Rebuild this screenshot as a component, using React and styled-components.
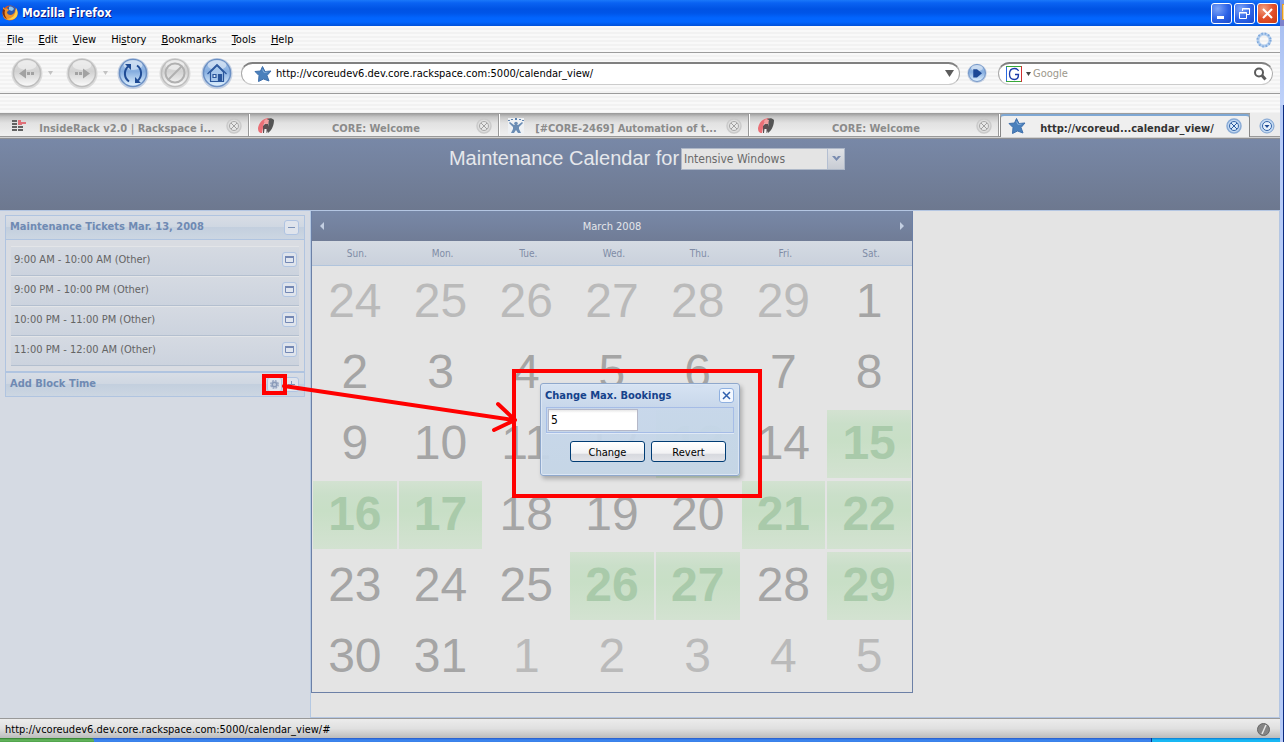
import React from "react";
import styled, { createGlobalStyle, css } from "styled-components";

const ui = `"DejaVu Sans Condensed", "DejaVu Sans", sans-serif`;
const arial = `"Liberation Sans", Arial, sans-serif`;

const Global = createGlobalStyle`
  *, *::before, *::after { box-sizing: border-box; }
  html, body { margin: 0; padding: 0; }
  body { font-family: ${ui}; font-size: 11px; color: #000; background: #b9cdf6; }
  button, input, select { font: inherit; margin: 0; padding: 0; }
  button { border: 0; background: none; display: block; }
  a { color: inherit; text-decoration: none; }
  svg { display: block; flex: none; }
  h1, h2 { margin: 0; }
`;

const stripes = css`
  background: repeating-linear-gradient(#f9f9f9 0 2px, #f2f2f2 2px 4px);
`;

const Desktop = styled.div`
  position: relative;
  display: flex;
  min-height: 100vh;
`;
const Main = styled.div`
  flex: 1;
  min-width: 0;
  display: flex;
  flex-direction: column;
`;
const Edge = styled.div`
  width: 4px;
  display: flex;
  flex-direction: column;
`;
const EdgeTop = styled.div`
  height: 26px;
  padding: 4px 0 0 2px;
  background: linear-gradient(#7c9cec, #7d7fc8);
`;
const EdgeMark = styled.div`
  height: 16px;
  border: 1px solid #e8a020;
  border-right: 0;
  background: #fbd795;
`;
const EdgeMid = styled.div`
  height: 79px;
  background: linear-gradient(#a9c0f2, #bfd2fa);
`;
const EdgeLow = styled.div`
  flex: 1;
  background: #b5caf7;
  border-right: 1px solid #0a2a80;
`;

const TitleBar = styled.header`
  height: 26px;
  display: flex;
  align-items: center;
  gap: 3px;
  padding: 0 2px;
  background: linear-gradient(#1a78fa 0, #0a62f2 3px, #0053e4 9px, #0055e8 13px, #0265fe 18px, #0265fe 22px, #0050d8 26px);
`;
const WindowTitle = styled.h1`
  flex: 1;
  font: bold 12px/16px ${ui};
  color: #fff;
  text-shadow: 1px 1px 0 #0a1883;
`;
const WinButton = styled.button`
  width: 21px;
  height: 21px;
  border: 1px solid #fff;
  border-radius: 3px;
  margin-left: -1px;
  display: grid;
  place-items: center;
  background: ${(p) =>
    p.$close
      ? "radial-gradient(circle at 30% 25%, #f0a080, #e2502c 50%, #c83a10)"
      : "radial-gradient(circle at 30% 25%, #7da4f8, #2c62e6 55%, #1b49c8)"};
`;

const MenuBar = styled.nav`
  height: 27px;
  border-bottom: 1px solid #9c9c9c;
  ${stripes}
  display: flex;
  align-items: center;
  gap: 15px;
  padding: 2px 8px 0 7px;
`;
const MenuLink = styled.a`
  line-height: 16px;
  u { text-underline-offset: 1px; }
`;
const Spring = styled.span`
  flex: 1;
`;

const NavBar = styled.div`
  height: 41px;
  border-bottom: 1px solid #9c9c9c;
  ${stripes}
  display: flex;
  align-items: center;
  padding: 0 7px 0 11px;
`;
const NavButton = styled.button`
  margin-right: ${(p) => p.$after}px;
`;
const Caret = styled.span`
  width: 5px;
  height: 4px;
  background: #c2c2c2;
  clip-path: polygon(0 0, 100% 0, 50% 100%);
  margin-right: ${(p) => p.$after}px;
`;
const Pill = styled.div`
  height: 23px;
  display: flex;
  align-items: center;
  border: 1px solid #a8a8a8;
  border-top: 2px solid #808080;
  border-bottom-color: #ccc;
  border-radius: 12px;
  background: #fff;
`;
const Location = styled(Pill)`
  flex: 1;
  padding: 0 5px 0 12px;
  gap: 4px;
  margin: 0 7px 0 8px;
`;
const Search = styled(Pill)`
  width: 275px;
  padding: 0 5px 0 7px;
  margin-left: 11px;
`;
const PlainInput = styled.input`
  flex: 1;
  min-width: 0;
  border: 0;
  outline: 0;
  background: none;
  height: 16px;
  &::placeholder { color: #9c988c; opacity: 1; }
`;
const BookmarkBar = styled.div`
  height: 19px;
  ${stripes}
`;

const TabStrip = styled.nav`
  height: 26px;
  display: flex;
  border-bottom: 1px solid #8f9094;
  box-shadow: inset 0 -1px 0 #d0d0d0, inset 0 -2px 0 #999;
  background: linear-gradient(#979797, #c6c6c6 4px, #e2e2e2 10px, #e6e6e6 14px, #f0f0f0 23px);
`;
const Tab = styled.div`
  flex: 1;
  min-width: 0;
  display: flex;
  align-items: center;
  margin: 1px 0 2px;
  padding: 1px 7px 0 8px;
  border-right: 1px solid #fff;
  box-shadow: inset -1px 0 0 #999;
  color: #8b8b8b;
  ${(p) =>
    p.$active &&
    css`
      color: #333;
      background: #efefef;
      border-left: 1px solid #888;
      border-right-color: #888;
      border-top: 2px solid #7fa8d4;
      border-radius: 4px 4px 0 0;
      margin-bottom: 1px;
      padding: 0 7px 2px 7px;
      box-shadow: none;
    `}
`;
const TabLabel = styled.a`
  flex: 1;
  min-width: 0;
  padding: 6px 8px 0 10px;
  font-weight: bold;
  line-height: 16px;
  text-align: center;
  white-space: nowrap;
`;
const TabList = styled.button`
  width: 30px;
  display: grid;
  place-items: center;
  padding: 2px 0 0 4px;
  background: #ececec;
  margin-bottom: 2px;
`;

const Page = styled.main`
  flex: 1;
  display: flex;
  flex-direction: column;
  background: #e4e4e4;
`;
const Banner = styled.div`
  height: 71px;
  padding: 8px 0 0 14px;
  display: flex;
  justify-content: center;
  align-items: flex-start;
  gap: 2px;
  background: linear-gradient(#7888a7, #6d788f);
`;
const BannerLabel = styled.label`
  font: 20px/22px ${arial};
  color: #e6e8ec;
`;
const Combo = styled.div`
  width: 164px;
  height: 22px;
  margin-top: 1px;
  display: flex;
  border: 1px solid #aeb8c8;
  background: #e4e4e4;
  position: relative;
`;
const ComboSelect = styled.select`
  flex: 1;
  appearance: none;
  border: 0;
  outline: 0;
  background: none;
  padding: 0 20px 1px 2px;
  font-size: 12px;
  color: #6a6a6a;
`;
const ComboArrow = styled.span`
  position: absolute;
  right: 0;
  top: 0;
  bottom: 0;
  width: 17px;
  display: grid;
  place-items: center;
  pointer-events: none;
  border-left: 1px solid #b4bfd2;
  background: linear-gradient(#e0e2e6, #c8ccd4);
`;

const Columns = styled.div`
  flex: 1;
  display: flex;
`;
const Sidebar = styled.aside`
  width: 311px;
  padding: 4px 5px 0;
  background: #d5dae3;
  border-top: 1px solid #b4c6e2;
  border-right: 1px solid #b4c8e2;
`;
const Panel = styled.section`
  border: 1px solid #b0c4e0;
  box-shadow: inset 0 0 0 1px #dfe3ea;
`;
const PanelHead = styled.div`
  height: ${(p) => (p.$closed ? 23 : 24)}px;
  display: flex;
  align-items: center;
  gap: 2px;
  padding: 0 5px 1px 4px;
  border-bottom: ${(p) => (p.$closed ? 0 : "1px solid #b0c4e0")};
  background: linear-gradient(#d8dde5, #cfd7e2 48%, #c3cfde 50%, #ccd6e2);
`;
const PanelTitle = styled.h2`
  flex: 1;
  font: bold 11px/16px ${ui};
  color: #6f8ab3;
`;
const TicketList = styled.ul`
  list-style: none;
  margin: 0;
  padding: 6px 5px 5px;
  background: #d9dce2;
`;
const Ticket = styled.li`
  height: 30px;
  display: flex;
  align-items: center;
  justify-content: space-between;
  padding: 0 2px 3px 3px;
  border-top: 1px solid #e3e5e8;
  border-bottom: 1px solid #b3bfcf;
  background: linear-gradient(#d5dae2, #ccd3de);
  color: #646464;
  line-height: 16px;
`;
const Tool = styled.button`
  width: 15px;
  height: 15px;
  display: grid;
  place-items: center;
  border: 1px solid ${(p) => (p.$strong ? "#8fb0e0" : "#b0c4e2")};
  border-radius: 3px;
  background: ${(p) => (p.$strong ? "#f4f8ff" : "#dfe4ec")};
`;

const Stage = styled.div`
  flex: 1;
  border: 1px solid #b4c6e2;
  border-left: 0;
`;
const Calendar = styled.section`
  width: 602px;
  border: 1px solid #6c80a6;
  border-top: 0;
`;
const MonthBar = styled.div`
  height: 30px;
  display: flex;
  align-items: center;
  justify-content: space-between;
  padding: 0 6px;
  background: linear-gradient(#7888a7, #707c96);
  color: #e4e6ea;
`;
const Days = styled.table`
  width: 100%;
  table-layout: fixed;
  border-collapse: separate;
  border-spacing: 0;
  th {
    height: 25px;
    padding: 1px 0 0 4px;
    font: 10px/14px ${ui};
    color: #7f8ca6;
    background: linear-gradient(#d5dbe3, #cad1dc);
    border-bottom: 1px solid #b0c4dc;
  }
  td { padding: 2px 1px 1px; }
`;
const Day = styled.a`
  display: block;
  height: 68px;
  font: 48px/66px ${arial};
  text-align: center;
  color: ${(p) => (p.$kind === "out" ? "#bababa" : "#a5a5a5")};
  ${(p) =>
    p.$kind === "open" &&
    css`
      font-weight: bold;
      color: #a9caaa;
      background: linear-gradient(#d3e2d1, #cadfc9 14px, #c8dfc6 30px, #d3e2d1);
    `}
`;

const StatusBar = styled.footer`
  height: 20px;
  display: flex;
  align-items: center;
  justify-content: space-between;
  padding: 1px 10px 0 5px;
  border-top: 1px solid #999;
  background: linear-gradient(#ececec, #e0e0e0 50%, #bcbcbc);
`;
const TaskBar = styled.div`
  height: 4px;
  display: flex;
  background: linear-gradient(#2458c8, #3c86f0 2px, #3a80e8);
`;
const StartEdge = styled.div`
  width: 94px;
  border-radius: 0 3px 0 0;
  background: linear-gradient(#2c7a2c, #68b860 2px, #4ca048);
`;
const TrayEdge = styled.div`
  width: 129px;
  margin-left: auto;
  border-left: 1px solid #0a3a8c;
  background: linear-gradient(#0c78d0, #18b8f4 2px);
`;

const Dialog = styled.form`
  position: absolute;
  left: 540px;
  top: 383px;
  width: 200px;
  height: 93px;
  padding: 3px 5px 0 4px;
  border: 1px solid #8fa8cc;
  border-radius: 3px;
  background: linear-gradient(rgba(214, 227, 243, 0.97), rgba(199, 215, 235, 0.95) 22px, rgba(196, 213, 230, 0.95));
  box-shadow: inset 0 0 0 1px #dbe6f4, 2px 3px 4px rgba(0, 0, 0, 0.25);
`;
const DialogHead = styled.div`
  display: flex;
  align-items: center;
  justify-content: space-between;
  height: 17px;
`;
const DialogTitle = styled.label`
  font-weight: bold;
  line-height: 16px;
  color: #15428b;
`;
const FieldRow = styled.div`
  height: 26px;
  margin: 3px 0 0 1px;
  padding: 1px;
  border: 1px solid #a5bce6;
  box-shadow: 0 1px 0 #dfe9f6;
`;
const NumberInput = styled.input`
  display: block;
  width: 90px;
  height: 22px;
  padding: 0 2px;
  border: 1px solid #b5b8c8;
  outline: 0;
  background: linear-gradient(#e8e8e8, #fff 3px);
  font-size: 12px;
`;
const Actions = styled.div`
  display: flex;
  justify-content: flex-end;
  gap: 6px;
  padding: 8px 8px 0 0;
`;
const PushButton = styled.button`
  width: 75px;
  height: 21px;
  padding-top: 1px;
  border: 1px solid #003c74;
  border-radius: 3px;
  background: linear-gradient(#fff, #f2f2f4 60%, #d6d8de 62%, #e2e3e8);
`;
const Marker = styled.div`
  position: absolute;
  pointer-events: none;
  border: 4px solid #f00;
  left: ${(p) => p.$x}px;
  top: ${(p) => p.$y}px;
  width: ${(p) => p.$w}px;
  height: ${(p) => p.$h}px;
`;
const Arrow = styled.svg`
  position: absolute;
  left: 280px;
  top: 380px;
  pointer-events: none;
`;

function Orb({ blue, size = 32, children }) {
  const id = `orb-${blue ? "blue" : "gray"}`;
  return (
    <svg width={size} height={size} viewBox="0 0 32 32">
      <defs>
        <linearGradient id={id} x1="0" y1="0" x2="0" y2="1">
          <stop offset="0" stopColor={blue ? "#a9c6e8" : "#dedede"} />
          <stop offset="0.45" stopColor={blue ? "#86aee0" : "#d2d2d2"} />
          <stop offset="1" stopColor={blue ? "#e4f4ff" : "#fbfbfb"} />
        </linearGradient>
      </defs>
      <circle cx="16" cy="16.5" r="15.5" fill={blue ? "#c4d0e2" : "#dadada"} />
      <circle cx="16" cy="16" r="13.5" fill={`url(#${id})`} stroke={blue ? "#6a8fc4" : "#bdbdbd"} strokeWidth="1.5" />
      <ellipse cx="16" cy="8" rx="9.5" ry="5" fill="#fff" opacity="0.45" />
      {children}
    </svg>
  );
}

const BackGlyph = () => (
  <path d="M8 16.500l7-5v10zM16 15h3v3h-3zM20 15h3v3h-3z" fill="#a2a2a2" />
);
const ForwardGlyph = () => (
  <path d="M24 16.500l-7-5v10zM13 15h3v3h-3zM9 15h3v3H9z" fill="#a2a2a2" />
);
const ReloadGlyph = () => (
  <g fill="none" stroke="#1f4b94" strokeWidth="2">
    <path d="M12 24.500C7 21 6.500 14 11 9.500M20 8.500c5 3.500 5.500 10.500 1 15" />
    <path d="M8 7h6v6zM24 26h-6v-6z" fill="#1f4b94" stroke="none" />
  </g>
);
const StopGlyph = () => (
  <g fill="none" stroke="#b0b0b0" strokeWidth="2">
    <circle cx="16" cy="16" r="9.500" />
    <path d="M9.500 22.500l13-13" />
  </g>
);
const HomeGlyph = () => (
  <g fill="none" stroke="#2a569c" strokeWidth="1.200">
    <path d="M9.500 15v9.500h13V15L16 8.500z" fill="#a8c8ec" />
    <path d="M6.500 17L16 7.500l9.500 9.500" />
    <path d="M12 17.500h3v3h-3z" fill="#dcebfb" />
    <path d="M17.500 17.500h3v7h-3z" fill="#2a569c" />
  </g>
);

const Firefox = () => (
  <svg width="17" height="16" viewBox="0 0 17 16">
    <circle cx="8" cy="8" r="7.500" fill="#d8581c" />
    <circle cx="9" cy="6" r="5" fill="#2c58b0" />
    <path d="M7 2c2-1 4 0 5 2l-2 2-3-1z" fill="#8cc4ee" />
    <path d="M1 2l2 2c2-1 3 0 4 1L5 7c0 3 4 4 6 2 2-1 2-3 2-5 4 4 2 10-4 11C3 16 0 12 1 7z" fill="#f0922a" />
    <path d="M14 3c3 4 2 9-2 11-2 1-5 1-7 0 5 0 9-4 9-11z" fill="#fbd04a" />
    <path d="M1 4c-1 4 0 8 4 10-2-3-3-5-2-9z" fill="#7a2c14" />
  </svg>
);
const Star = () => (
  <svg width="18" height="18" viewBox="0 0 18 18">
    <path d="M8.500 1.500l2.500 5 6-.500-4 4.500 2 5.500-5.500-2-5 2.500.500-6-4-4 5.500-.500z" fill="#4a80bc" stroke="#3f70ac" strokeLinejoin="round" />
    <path d="M8.500 4.500l1.500 3 3.500-.500" stroke="#86aed8" fill="none" />
  </svg>
);
const CloseGlyph = ({ active }) => (
  <svg width="16" height="16" viewBox="0 0 16 16">
    <circle cx="8" cy="8" r="7" fill={active ? "#c2d8f2" : "#dedede"} stroke={active ? "#88aad6" : "#cacaca"} strokeWidth="1.500" />
    <circle cx="8" cy="8" r="4.500" fill={active ? "#dcebfa" : "#e8e8e8"} stroke={active ? "#3565a8" : "#a8a8a8"} />
    <path d="M5 5l6 6M11 5l-6 6" stroke={active ? "#285aa0" : "#a0a0a0"} />
  </svg>
);
const InsideIcon = () => (
  <svg width="18" height="16" viewBox="0 0 18 16">
    <path d="M4 2h5v2H4zM4 5h5v2H4zM4 8h5v2H4zM4 11h5v2H4zM10 8h5v2h-5zM10 11h5v2h-5z" fill="#626262" />
    <path d="M10 2h3v2h5v2h-4v1h-4z" fill="#e07078" />
  </svg>
);
const CoreIcon = () => (
  <svg width="16" height="16" viewBox="0 0 16 16">
    <path d="M10 0C4 1 1 5 0 10c0 3 1 5 4 5l1-5c0-4 3-7 6-10z" fill="#ea6f76" />
    <path d="M9 1c3-1 5-1 7 1 0 5-2 10-6 13l-1-4c2-3 2-6 0-10z" fill="#555" />
    <path d="M6 3l2-2 3 1-1 4-3 1z" fill="#f0a0a0" />
    <path d="M5 8l2-2h3l1 4-2 5H5z" fill="#5a5052" />
    <path d="M6 15l.500-4h2V15z" fill="#f4f4f4" />
  </svg>
);
const JiraIcon = () => (
  <svg width="16" height="16" viewBox="0 0 16 16">
    <path d="M0 0h16v16H0z" fill="#eef1f4" />
    <path d="M1 5l4 4v2l-2 4h3l2-3 2 3h3l-2-4V9l4-4-1-1-4 3H6L2 4z" fill="#6a8cb4" />
    <circle cx="8" cy="5.500" r="1.800" fill="#6a8cb4" />
    <path d="M0 2h2v1H0zM3 1h2v1H3zM7 0h2v2H7zM11 1h2v1h-2zM14 2h2v1h-2z" fill="#5f84b0" />
  </svg>
);
const WindowIcon = () => (
  <svg width="9" height="8" viewBox="0 0 9 8">
    <path d="M0.500 0.500h8v6h-8z" fill="#e0e6f0" stroke="#7488b4" />
    <path d="M0 0h9v2H0z" fill="#7488b4" />
  </svg>
);
const Throbber = () => (
  <svg width="16" height="16" viewBox="0 0 16 16">
    <circle cx="8" cy="8" r="6" fill="none" stroke="#b4cfee" strokeWidth="3" />
    <circle cx="8" cy="8" r="6.500" fill="none" stroke="#7fa8dc" strokeWidth="2" strokeDasharray="1.500 1.900" />
  </svg>
);

const tabs = [
  { icon: <InsideIcon />, label: "InsideRack v2.0 | Rackspace i..." },
  { icon: <CoreIcon />, label: "CORE: Welcome" },
  { icon: <JiraIcon />, label: "[#CORE-2469] Automation of t..." },
  { icon: <CoreIcon />, label: "CORE: Welcome" },
  { icon: <Star />, label: "http://vcoreud...calendar_view/", active: true },
];
const tickets = [
  "9:00 AM - 10:00 AM (Other)",
  "9:00 PM - 10:00 PM (Other)",
  "10:00 PM - 11:00 PM (Other)",
  "11:00 PM - 12:00 AM (Other)",
];
const weekdays = ["Sun.", "Mon.", "Tue.", "Wed.", "Thu.", "Fri.", "Sat."];
const open = new Set([13, 15, 16, 17, 21, 22, 26, 27, 29]);
const weeks = Array.from({ length: 6 }, (_, w) =>
  Array.from({ length: 7 }, (_, d) => {
    const n = w * 7 + d - 5;
    if (n < 1) return { day: n + 29, kind: "out" };
    if (n > 31) return { day: n - 31, kind: "out" };
    return { day: n, kind: open.has(n) ? "open" : "in" };
  })
);

export default function App() {
  return (
    <>
      <Global />
      <Desktop>
        <Main>
          <TitleBar>
            <Firefox />
            <WindowTitle>Mozilla Firefox</WindowTitle>
            <WinButton aria-label="Minimize">
              <svg width="13" height="13"><path d="M2 9h7v3H2z" fill="#fff" /></svg>
            </WinButton>
            <WinButton aria-label="Restore">
              <svg width="13" height="13" fill="none" stroke="#fff">
                <path d="M4.500 4V1.500h7v6H9M4 2h8" />
                <path d="M1.500 5.500h7v6h-7zM1 6h8" />
              </svg>
            </WinButton>
            <WinButton $close aria-label="Close">
              <svg width="13" height="13"><path d="M2 2l9 9M11 2l-9 9" stroke="#fff" strokeWidth="2" /></svg>
            </WinButton>
          </TitleBar>

          <MenuBar>
            <MenuLink href="#"><u>F</u>ile</MenuLink>
            <MenuLink href="#"><u>E</u>dit</MenuLink>
            <MenuLink href="#"><u>V</u>iew</MenuLink>
            <MenuLink href="#">Hi<u>s</u>tory</MenuLink>
            <MenuLink href="#"><u>B</u>ookmarks</MenuLink>
            <MenuLink href="#"><u>T</u>ools</MenuLink>
            <MenuLink href="#"><u>H</u>elp</MenuLink>
            <Spring />
            <Throbber />
          </MenuBar>

          <NavBar>
            <NavButton aria-label="Back" $after={5}><Orb><BackGlyph /></Orb></NavButton>
            <Caret $after={13} />
            <NavButton aria-label="Forward" $after={5}><Orb><ForwardGlyph /></Orb></NavButton>
            <Caret $after={9} />
            <NavButton aria-label="Reload" $after={10}><Orb blue><ReloadGlyph /></Orb></NavButton>
            <NavButton aria-label="Stop" $after={10}><Orb><StopGlyph /></Orb></NavButton>
            <NavButton aria-label="Home" $after={0}><Orb blue><HomeGlyph /></Orb></NavButton>
            <Location>
              <Star />
              <PlainInput aria-label="Address" defaultValue="http://vcoreudev6.dev.core.rackspace.com:5000/calendar_view/" />
              <svg width="10" height="8"><path d="M1 0h9L5.500 7z" fill="#5c5c5c" /></svg>
            </Location>
            <NavButton aria-label="Go" $after={0}>
              <Orb blue size={20}><path d="M10 10h6l8 6.500-8 6.500h-6z" fill="#1c4896" /></Orb>
            </NavButton>
            <Search>
              <svg width="27" height="16" viewBox="0 0 27 16">
                <path d="M0.500 0v15" stroke="#2a6ae0" />
                <path d="M0 0.500h16M0 15.500h16" stroke="#38a838" />
                <path d="M15.500 0v16" stroke="#d03030" />
                <path d="M12.500 5C12 3.500 10.500 2.500 8.500 2.500 5 2.500 3.500 5 3.500 8s1.500 5.500 5 5.500c2.500 0 4-1.500 4-5H9" fill="none" stroke="#1c3caa" strokeWidth="1.300" />
                <path d="M20 6h5l-2.500 4z" fill="#444" />
              </svg>
              <PlainInput aria-label="Search" placeholder="Google" />
              <svg width="14" height="14" fill="none" stroke="#5c5c5c" strokeWidth="2">
                <circle cx="6" cy="5.500" r="4" />
                <path d="M9 8.500l3.500 4" strokeWidth="3" />
              </svg>
            </Search>
          </NavBar>
          <BookmarkBar />

          <TabStrip>
            {tabs.map((t, i) => (
              <Tab key={i} $active={t.active}>
                {t.icon}
                <TabLabel href="#">{t.label}</TabLabel>
                <button aria-label="Close tab"><CloseGlyph active={t.active} /></button>
              </Tab>
            ))}
            <TabList aria-label="List tabs">
              <svg width="16" height="16" viewBox="0 0 16 16">
                <circle cx="8" cy="8" r="7" fill="#c4daf2" stroke="#7ea2d0" />
                <circle cx="8" cy="8" r="4.500" fill="#e8f2fc" stroke="#3565a8" />
                <path d="M5.500 7h5L8 10z" fill="#1f4b94" />
              </svg>
            </TabList>
          </TabStrip>

          <Page>
            <Banner>
              <BannerLabel htmlFor="team">Maintenance Calendar for</BannerLabel>
              <Combo>
                <ComboSelect id="team">
                  <option>Intensive Windows</option>
                </ComboSelect>
                <ComboArrow>
                  <svg width="9" height="6"><path d="M0 0h3l1.500 2L6 0h3L4.500 5z" fill="#7a8cb0" /></svg>
                </ComboArrow>
              </Combo>
            </Banner>
            <Columns>
              <Sidebar>
                <Panel>
                  <PanelHead>
                    <PanelTitle>Maintenance Tickets Mar. 13, 2008</PanelTitle>
                    <Tool aria-label="Collapse">
                      <svg width="7" height="7"><path d="M0 3h7v1H0z" fill="#7d93b8" /></svg>
                    </Tool>
                  </PanelHead>
                  <TicketList>
                    {tickets.map((t) => (
                      <Ticket key={t}>
                        {t}
                        <Tool aria-label="Open ticket"><WindowIcon /></Tool>
                      </Ticket>
                    ))}
                  </TicketList>
                </Panel>
                <Panel>
                  <PanelHead $closed>
                    <PanelTitle>Add Block Time</PanelTitle>
                    <Tool aria-label="Settings">
                      <svg width="9" height="9" viewBox="0 0 9 9">
                        <circle cx="4.500" cy="4.500" r="3.700" fill="none" stroke="#9aa8c4" strokeWidth="1.500" strokeDasharray="1.900 1" />
                        <circle cx="4.500" cy="4.500" r="2.300" fill="#c0cada" stroke="#8a9ab8" strokeWidth="1.500" />
                      </svg>
                    </Tool>
                    <Tool aria-label="Expand">
                      <svg width="7" height="7"><path d="M0 3h7v1H0zM3 0h1v7H3z" fill="#7d93b8" /></svg>
                    </Tool>
                  </PanelHead>
                </Panel>
              </Sidebar>
              <Stage>
                <Calendar>
                  <MonthBar>
                    <button aria-label="Previous month">
                      <svg width="8" height="9"><path d="M6 0v8L2 4z" fill="#c3cfe2" /></svg>
                    </button>
                    March 2008
                    <button aria-label="Next month">
                      <svg width="8" height="9"><path d="M2 0v8l4-4z" fill="#c3cfe2" /></svg>
                    </button>
                  </MonthBar>
                  <Days>
                    <thead>
                      <tr>{weekdays.map((d) => <th key={d}>{d}</th>)}</tr>
                    </thead>
                    <tbody>
                      {weeks.map((w, i) => (
                        <tr key={i}>
                          {w.map((d) => (
                            <td key={d.day}><Day href="#" $kind={d.kind}>{d.day}</Day></td>
                          ))}
                        </tr>
                      ))}
                    </tbody>
                  </Days>
                </Calendar>
              </Stage>
            </Columns>
          </Page>

          <StatusBar>
            http://vcoreudev6.dev.core.rackspace.com:5000/calendar_view/#
            <svg width="13" height="13">
              <circle cx="6.500" cy="6.500" r="6" fill="#858585" stroke="#666" />
              <path d="M5 11l4-9" stroke="#e8e8e8" strokeWidth="1.500" />
            </svg>
          </StatusBar>
          <TaskBar>
            <StartEdge />
            <TrayEdge />
          </TaskBar>
        </Main>
        <Edge>
          <EdgeTop><EdgeMark /></EdgeTop>
          <EdgeMid />
          <EdgeLow />
        </Edge>

        <Dialog onSubmit={(e) => e.preventDefault()}>
          <DialogHead>
            <DialogTitle htmlFor="bookings">Change Max. Bookings</DialogTitle>
            <Tool type="button" $strong aria-label="Close">
              <svg width="9" height="9"><path d="M1 1l7 7M8 1l-7 7" stroke="#2f5fae" strokeWidth="1.500" /></svg>
            </Tool>
          </DialogHead>
          <FieldRow>
            <NumberInput id="bookings" defaultValue="5" />
          </FieldRow>
          <Actions>
            <PushButton>Change</PushButton>
            <PushButton type="button">Revert</PushButton>
          </Actions>
        </Dialog>

        <Marker $x={262} $y={374} $w={25} $h={21} />
        <Marker $x={512} $y={369} $w={250} $h={129} />
        <Arrow width="240" height="56" fill="none" stroke="#f00" strokeWidth="4">
          <path d="M4 6L234 40M218 24l17 16M235 40L214 50" strokeLinecap="round" />
        </Arrow>
      </Desktop>
    </>
  );
}
